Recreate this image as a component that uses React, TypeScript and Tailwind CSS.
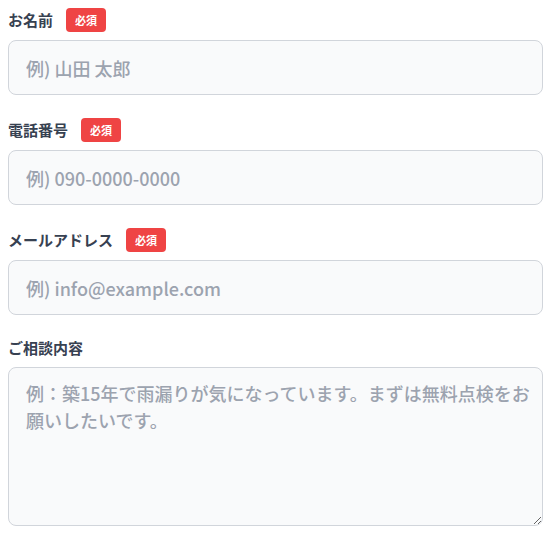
import React from "react";

const font = { fontFamily: '"Noto Sans CJK JP", "Noto Sans", sans-serif' };

function Badge() {
  return (
    <span className="ml-[13px] inline-flex h-6 items-center rounded-[4px] bg-[#ef4444] px-[9px] text-[11px] font-bold leading-none text-white">
      必須
    </span>
  );
}

function Field({ label, placeholder, required = true }: { label: string; placeholder: string; required?: boolean }) {
  return (
    <div className="flex flex-col">
      <div className="mb-2 flex h-6 items-center">
        <span className="text-[15px] font-bold leading-[22px] text-[#374151]">{label}</span>
        {required && <Badge />}
      </div>
      <input
        className="h-[55px] w-full rounded-lg border border-[#d1d5db] bg-[#f9fafb] px-[17px] text-[18px] font-medium text-[#374151] outline-none placeholder:text-[#9ca3af]"
        style={font}
        placeholder={placeholder}
      />
    </div>
  );
}

export default function App() {
  return (
    <div className="flex flex-col gap-[23px] bg-white p-2" style={font}>
      <Field label="お名前" placeholder="例) 山田 太郎" />
      <Field label="電話番号" placeholder="例) 090-0000-0000" />
      <Field label="メールアドレス" placeholder="例) info@example.com" />
      <div className="-mt-px flex flex-col">
        <div className="mb-2 flex items-center">
          <span className="text-[15px] font-bold leading-[22px] text-[#374151]">ご相談内容</span>
        </div>
        <textarea
          className="h-[159px] w-full rounded-lg border border-[#d1d5db] bg-[#f9fafb] py-3 pl-[17px] pr-[8px] text-[18px] font-medium leading-[27px] text-[#374151] outline-none placeholder:text-[#9ca3af]"
          style={font}
          placeholder="例：築15年で雨漏りが気になっています。まずは無料点検をお願いしたいです。"
        />
      </div>
    </div>
  );
}
